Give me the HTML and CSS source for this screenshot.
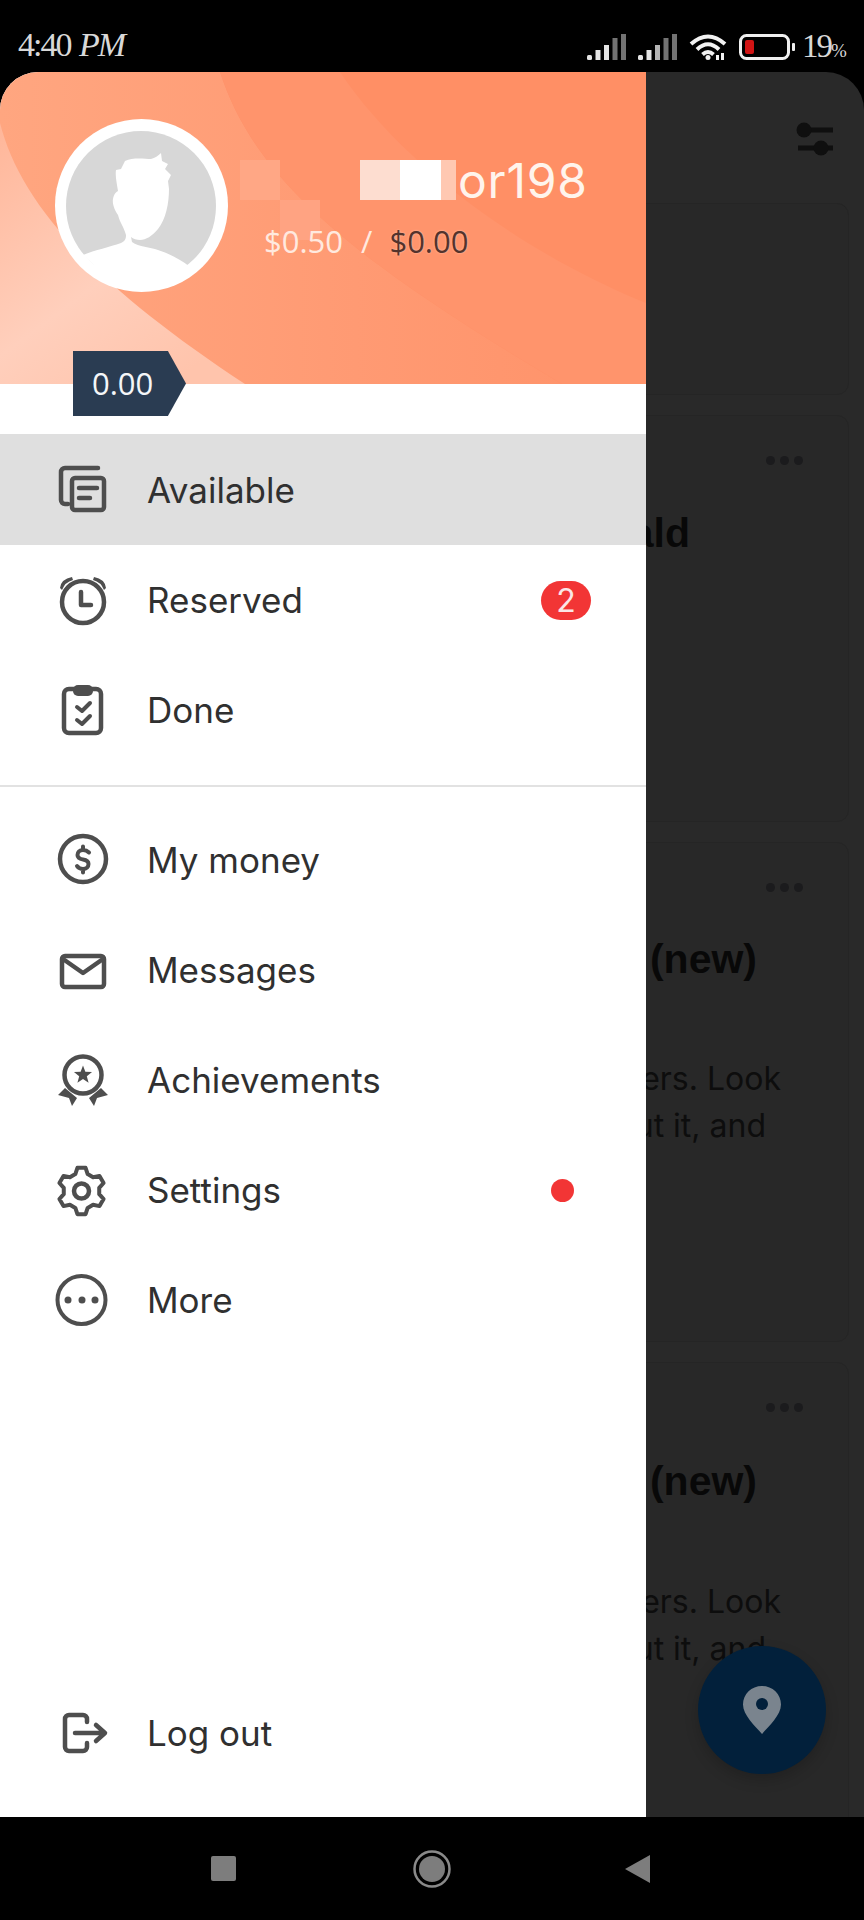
FILE: index.html
```html
<!DOCTYPE html>
<html lang="en">
<head>
<meta charset="utf-8">
<title>Menu</title>
<link rel="stylesheet" href="styles.css">
</head>
<body>
<div class="phone">
  <header class="status">
    <div class="clock"><span>4:40</span> <em>PM</em></div>
    <div class="status-icons">
      <svg class="sig" viewBox="0 0 40 26"><rect class="on" x="0" y="21" width="5" height="5" rx="1.5"/><rect class="on" x="8.5" y="16" width="5" height="10"/><rect class="on" x="17" y="11" width="5" height="15"/><rect class="off" x="25.5" y="4" width="5" height="22"/><rect class="off" x="34" y="0" width="5" height="26"/></svg>
      <svg class="sig" viewBox="0 0 40 26"><rect class="on" x="0" y="21" width="5" height="5" rx="1.5"/><rect class="on" x="8.5" y="16" width="5" height="10"/><rect class="dim" x="17" y="11" width="5" height="15"/><rect class="off" x="25.5" y="4" width="5" height="22"/><rect class="off" x="34" y="0" width="5" height="26"/></svg>
      <svg class="wifi" viewBox="0 0 39 26"><path d="M2 10Q19-5 36 10M8 15.5Q19 5 30 15.5M13.5 20.5Q19 15.5 24.5 20.5"/><circle cx="19" cy="23.5" r="2.5"/><rect x="27" y="21" width="3" height="5"/><rect x="32" y="19" width="3" height="7"/></svg>
      <svg class="batt" viewBox="0 0 57 26"><rect class="batt-case" x="1.5" y="1.5" width="48" height="23" rx="6"/><rect class="batt-level" x="6" y="6" width="9" height="14" rx="2"/><rect class="batt-nub" x="53" y="9" width="3" height="8" rx="1"/></svg>
      <div class="pct">19<small>%</small></div>
    </div>
  </header>

  <main class="screen">
    <section class="behind">
      <div class="topbar">
        <svg class="filter" viewBox="0 0 38 34"><path d="M6 8H37M2 26H37"/><circle cx="8" cy="8" r="7.5"/><circle cx="25" cy="26" r="7.5"/></svg>
      </div>
      <div class="cards">
        <article class="card card-a"></article>
        <article class="card card-b">
          <div class="dots"><i></i><i></i><i></i></div>
          <h2 class="title title-short">ald</h2>
        </article>
        <article class="card card-c">
          <div class="dots"><i></i><i></i><i></i></div>
          <h2 class="title">(new)</h2>
          <p class="line line-one">vers. Look</p>
          <p class="line line-two">ut it, and</p>
        </article>
        <article class="card card-d">
          <div class="dots"><i></i><i></i><i></i></div>
          <h2 class="title">(new)</h2>
          <p class="line line-one">vers. Look</p>
          <p class="line line-two">ut it, and</p>
        </article>
      </div>
    </section>

    <button class="fab" type="button" aria-label="Map">
      <svg viewBox="0 0 38 48"><path class="pin" d="M19 0C8.500 0 0 8 0 18.500 0 29 12 40 19 48 26 40 38 29 38 18.500 38 8 29.500 0 19 0Z"/><circle class="pin-hole" cx="19" cy="18" r="6"/></svg>
    </button>

    <nav class="drawer">
      <div class="hero">
        <svg class="hero-bg" viewBox="0 0 646 312" preserveAspectRatio="none">
          <defs>
            <linearGradient id="base" x1="0" x2="1" y1="0" y2="0"><stop offset="0" stop-color="#ffa680"/><stop offset=".55" stop-color="#ff9a73"/><stop offset="1" stop-color="#ff9269"/></linearGradient>
            <linearGradient id="pale" x1="0" x2=".7" y1="0" y2="1"><stop offset="0" stop-color="#ffb699"/><stop offset=".6" stop-color="#ffcfbc"/><stop offset="1" stop-color="#ffc4ac"/></linearGradient>
          </defs>
          <rect width="646" height="312" fill="url(#base)"/>
          <path d="M220 0C255 105 340 180 562 312H646V0Z" fill="#ff8f65"/>
          <path d="M340 0C400 90 520 180 646 231V312H562C340 180 255 105 220 0Z" fill="#ff946c"/>
          <path d="M0 51C20 130 90 210 245 312H0Z" fill="url(#pale)"/>
        </svg>
        <div class="avatar">
          <svg viewBox="0 0 173 173">
            <circle class="avatar-bg" cx="86" cy="87" r="75"/>
            <path class="avatar-fg" d="M106 34l1 8 6 3-3 5 6 6-3 6 1 8C114 84 111 100 103 110 97 117 91 121 85 121 82 121 78 120 76 118L77 123C84 128 95 128 103 131 115 135 125 140 135 148L115 162H57L28 136C40 131 55 128 66 124 70 122 71 120 71 116 69 108 65 104 63 96 60 92 57 85 58 80 59 75 61 73 63 72 62 65 60 57 61 51L66 50 70 42C78 38 90 40 96 40 100 39 103 37 106 34Z"/>
          </svg>
        </div>
        <div class="info">
          <div class="name">
            <i class="px px-faint"></i>
            <i class="px px-pale"></i>
            <i class="px px-white"></i>
            <i class="px px-end"></i>
            <span>or198</span>
          </div>
          <div class="money"><span>$0.50</span><span class="slash">/</span><span class="money-dark">$0.00</span></div>
        </div>
        <i class="px px-lower"></i>
        <div class="tag">0.00</div>
      </div>

      <ul class="menu menu-top">
        <li class="row row-active">
          <svg class="ico" viewBox="0 0 56 56"><rect x="18" y="16" width="32" height="32" rx="3"/><path d="M44 6H11a4 4 0 0 0-4 4V38a4 4 0 0 0 4 4h3M25 26H43M25 36H36"/></svg>
          <span class="label">Available</span>
        </li>
        <li class="row">
          <svg class="ico" viewBox="0 0 56 56"><circle cx="29" cy="30" r="21"/><path d="M27 20V33H37"/><path class="solid" d="M6 16Q7 7 18 5L19 8Q11 10 8 18ZM52 16Q51 7 40 5L39 8Q47 10 50 18Z"/></svg>
          <span class="label">Reserved</span>
          <span class="badge">2</span>
        </li>
        <li class="row">
          <svg class="ico" viewBox="0 0 56 56"><rect x="10" y="7" width="37" height="44" rx="5"/><rect class="solid" x="19" y="3" width="20" height="11" rx="5"/><path class="thin" d="M23 25L28 29 36 21M23 38L28 42 36 34"/></svg>
          <span class="label">Done</span>
        </li>
      </ul>

      <hr class="rule">

      <ul class="menu">
        <li class="row">
          <svg class="ico" viewBox="0 0 56 56"><circle cx="29" cy="27" r="23"/><path class="thin" d="M35 20.500C33 18.500 31 18 29 18 25.500 18 23.500 20 23.500 23 23.500 26 26 27 29 27.500 32 28 34.500 29.500 34.500 32 34.500 35 32.500 37 29 37 26.500 37 24.500 36 23 34M29 14.500V18M29 37V40.500"/></svg>
          <span class="label">My money</span>
        </li>
        <li class="row">
          <svg class="ico" viewBox="0 0 56 56"><rect x="8" y="14" width="42" height="31" rx="3"/><path d="M9 17L29 31 49 17"/></svg>
          <span class="label">Messages</span>
        </li>
        <li class="row">
          <svg class="ico" viewBox="0 0 56 56"><circle cx="29" cy="23" r="18.500"/><polygon class="solid" points="29,13.500 31.350,19.760 38.030,20.060 32.800,24.240 34.580,30.690 29,27 23.420,30.690 25.200,24.240 19.970,20.060 26.650,19.760"/><polygon class="solid" points="4,43 11,36 23,46 18,54 15,46"/><polygon class="solid" points="54,43 47,36 35,46 40,54 43,46"/></svg>
          <span class="label">Achievements</span>
        </li>
        <li class="row">
          <svg class="ico" viewBox="0 0 56 56"><polygon class="thin" points="21.340,12.090 23.420,5.860 31.580,5.860 33.660,12.090 39.070,15.210 45.500,13.900 49.580,20.960 45.230,25.870 45.230,32.130 49.580,37.040 45.500,44.100 39.070,42.790 33.660,45.910 31.580,52.140 23.420,52.140 21.340,45.910 15.930,42.790 9.500,44.100 5.420,37.040 9.770,32.130 9.770,25.870 5.420,20.960 9.500,13.900 15.930,15.210"/><circle cx="27.500" cy="29" r="7.500"/></svg>
          <span class="label">Settings</span>
          <span class="dot"></span>
        </li>
        <li class="row">
          <svg class="ico" viewBox="0 0 56 56"><circle class="thin" cx="27.500" cy="28" r="24"/><circle class="solid" cx="14" cy="28" r="3.500"/><circle class="solid" cx="28" cy="28" r="3.500"/><circle class="solid" cx="41" cy="28" r="3.500"/></svg>
          <span class="label">More</span>
        </li>
      </ul>

      <div class="row row-logout">
        <svg class="ico" viewBox="0 0 56 56"><path d="M33 17V14a4 4 0 0 0-4-4H15a4 4 0 0 0-4 4V42a4 4 0 0 0 4 4H29a4 4 0 0 0 4-4V38M21 28H50M42 20L51 28 42 36"/></svg>
        <span class="label">Log out</span>
      </div>
    </nav>
  </main>

  <footer class="navbar">
    <svg class="nav-square" viewBox="0 0 25 25"><rect width="25" height="25" rx="2"/></svg>
    <svg class="nav-home" viewBox="0 0 38 38"><circle class="ring" cx="19" cy="19" r="17.500"/><circle cx="19" cy="19" r="13"/></svg>
    <svg class="nav-back" viewBox="0 0 25 28"><path d="M25 0V28L0 14Z"/></svg>
  </footer>
</div>
</body>
</html>
```
FILE: styles.css
```css
* { box-sizing: border-box; }

html, body {
  margin: 0;
  padding: 0;
  background: #000;
}

.phone {
  width: 864px;
  height: 1920px;
  display: flex;
  flex-direction: column;
  background: #000;
  overflow: hidden;
}

/* status bar */
.status {
  height: 72px;
  flex: none;
  display: flex;
  justify-content: space-between;
  align-items: flex-start;
  padding: 26px 19px 0 18px;
  color: #d8d8d8;
  font-family: "Liberation Serif", serif;
}

.clock {
  font-size: 34px;
  line-height: 38px;
  letter-spacing: -2px;
  white-space: nowrap;
}

.clock em {
  font-style: italic;
  margin-left: 2px;
}

.status-icons {
  display: flex;
  align-items: flex-start;
  gap: 11px;
  padding-top: 8px;
}

.sig { width: 40px; height: 26px; display: block; }
.sig .on { fill: #e4e4e4; }
.sig .dim { fill: #b5b5b5; }
.sig .off { fill: #737373; }

.wifi { width: 39px; height: 26px; display: block; }
.wifi path { fill: none; stroke: #f2f2f2; stroke-width: 4; }
.wifi circle, .wifi rect { fill: #f2f2f2; }

.batt { width: 57px; height: 26px; display: block; }
.batt-case { fill: none; stroke: #efefef; stroke-width: 3; }
.batt-level { fill: #d11414; }
.batt-nub { fill: #efefef; }

.pct {
  width: 43px;
  font-size: 33px;
  line-height: 28px;
  letter-spacing: -2px;
  margin-top: -2px;
  margin-left: -5px;
  white-space: nowrap;
}

.pct small {
  font-size: 19px;
}

/* screen */
.screen {
  flex: 1;
  position: relative;
  background: #292929;
  border-radius: 38px 38px 0 0;
  overflow: hidden;
}

.topbar {
  height: 131px;
  display: flex;
  justify-content: flex-end;
  padding: 50px 30px 0 0;
}

.filter { width: 38px; height: 34px; display: block; }
.filter path { fill: none; stroke: #0f0f0f; stroke-width: 5; }
.filter circle { fill: #0f0f0f; }

.cards {
  display: flex;
  flex-direction: column;
  gap: 20px;
  padding: 0 15px;
}

.card {
  background: #282828;
  border: 1px solid #252525;
  border-radius: 12px;
  padding: 40px 45px 0 0;
  color: #080808;
}

.card-a { height: 192px; }
.card-b { height: 407px; }
.card-c { height: 500px; }
.card-d { height: 500px; }

.dots {
  display: flex;
  justify-content: flex-end;
  gap: 5px;
  height: 9px;
}

.dots i {
  width: 9px;
  height: 9px;
  border-radius: 50%;
  background: #1b1b1d;
}

.title {
  margin: 42px 46px 0 0;
  text-align: right;
  font: 700 41px/50px "Liberation Sans", sans-serif;
}

.title-short {
  margin-right: 113px;
  margin-top: 43px;
}

.line {
  margin: 0;
  text-align: right;
  font: 400 32px/47px Inter, sans-serif;
  color: #0d0d0d;
}

.line-one {
  margin-top: 71px;
  margin-right: 22px;
}

.line-two { margin-right: 37px; }

.card-d .title { margin-top: 44px; }
.card-d .line-one { margin-top: 72px; }

.fab {
  position: absolute;
  right: 38px;
  bottom: 43px;
  width: 128px;
  height: 128px;
  border: 0;
  padding: 0;
  border-radius: 50%;
  background: #02203b;
  display: flex;
  align-items: center;
  justify-content: center;
  box-shadow: 0 6px 14px rgba(0, 0, 0, .18);
}

.fab svg { width: 38px; height: 48px; display: block; }
.pin { fill: #7a848e; }
.pin-hole { fill: #02203b; }

/* drawer */
.drawer {
  position: absolute;
  left: 0;
  top: 0;
  bottom: 0;
  width: 646px;
  background: #fff;
  display: flex;
  flex-direction: column;
  font-family: Inter, sans-serif;
  color: #333;
}

.hero {
  position: relative;
  height: 312px;
  flex: none;
  display: flex;
  align-items: flex-start;
  padding: 47px 0 0 55px;
}

.hero-bg {
  position: absolute;
  inset: 0;
  width: 100%;
  height: 100%;
  display: block;
}

.avatar {
  position: relative;
  width: 173px;
  height: 173px;
  flex: none;
  border-radius: 50%;
  background: #fff;
  overflow: hidden;
}

.avatar svg { width: 173px; height: 173px; display: block; }
.avatar-bg { fill: #d7d7d7; }
.avatar-fg { fill: #fff; }

.info {
  position: relative;
  margin-left: 12px;
  padding-top: 41px;
}

.name {
  display: flex;
  align-items: center;
  height: 40px;
  color: #fff4ec;
  font-size: 48px;
  line-height: 42px;
  white-space: nowrap;
}

.name span { letter-spacing: .8px; padding-top: 2px; }

.px { display: block; height: 40px; flex: none; }
.px-faint { width: 40px; background: #ffa785; margin-right: 80px; }
.px-pale { width: 40px; background: #fdddd0; }
.px-white { width: 41px; background: #fff; }
.px-end { width: 15px; background: #ffc8b2; margin-right: 2px; }

.px-lower {
  position: absolute;
  left: 280px;
  top: 128px;
  width: 40px;
  height: 40px;
  background: #ffa382;
}

.money {
  display: flex;
  align-items: center;
  margin: 22px 0 0 24px;
  font: 400 31px/38px "Open Sans", sans-serif;
  color: #ffe9df;
  position: relative;
  z-index: 1;
}

.slash { margin: 0 17px 0 18px; }
.money-dark { color: #54332c; text-shadow: 0 0 2px rgba(255, 225, 210, .7); }

.tag {
  position: absolute;
  left: 73px;
  top: 279px;
  width: 113px;
  height: 65px;
  display: flex;
  align-items: center;
  padding-left: 19px;
  background: #2a3c52;
  color: #f4f6f8;
  font: 400 31px/1 "Open Sans", sans-serif;
  clip-path: polygon(0 0, 84% 0, 100% 50%, 84% 100%, 0 100%);
}

.menu {
  list-style: none;
  margin: 0;
  padding: 0;
}

.menu-top { margin-top: 50px; }

.row {
  height: 110px;
  display: flex;
  align-items: center;
  padding-left: 54px;
}

.row-active {
  height: 111px;
  background: #dfdfdf;
}

.row-logout {
  margin-top: auto;
  margin-bottom: 29px;
  flex: none;
}

.ico {
  width: 56px;
  height: 56px;
  flex: none;
  display: block;
  fill: none;
  stroke: #4e4e4e;
  stroke-width: 4.500;
  stroke-linecap: round;
  stroke-linejoin: round;
}

.ico .solid { fill: #4e4e4e; stroke: none; }
.ico .thin { stroke-width: 4; }

.label {
  margin-left: 37px;
  font-size: 35px;
  line-height: 40px;
  color: #303030;
  white-space: nowrap;
}

.badge {
  margin-left: auto;
  margin-right: 55px;
  width: 50px;
  height: 39px;
  border-radius: 20px;
  background: #f23535;
  color: #fbe6e6;
  font-size: 32px;
  line-height: 39px;
  text-align: center;
}

.dot {
  margin-left: auto;
  margin-right: 72px;
  width: 23px;
  height: 23px;
  border-radius: 50%;
  background: #f23535;
}

.rule {
  width: 100%;
  height: 2px;
  margin: 20px 0 18px;
  border: 0;
  background: #e2e2e2;
}

/* nav bar */
.navbar {
  height: 103px;
  flex: none;
  display: flex;
  align-items: center;
  gap: 177px;
  padding-left: 211px;
  background: #000;
}

.navbar svg { display: block; fill: #7d7d7d; }
.nav-square { width: 25px; height: 25px; }
.nav-home { width: 38px; height: 38px; }
.nav-back { width: 25px; height: 28px; margin-left: -3px; }
.nav-home .ring { fill: none; stroke: #8a8a8a; stroke-width: 2.500; }
```
